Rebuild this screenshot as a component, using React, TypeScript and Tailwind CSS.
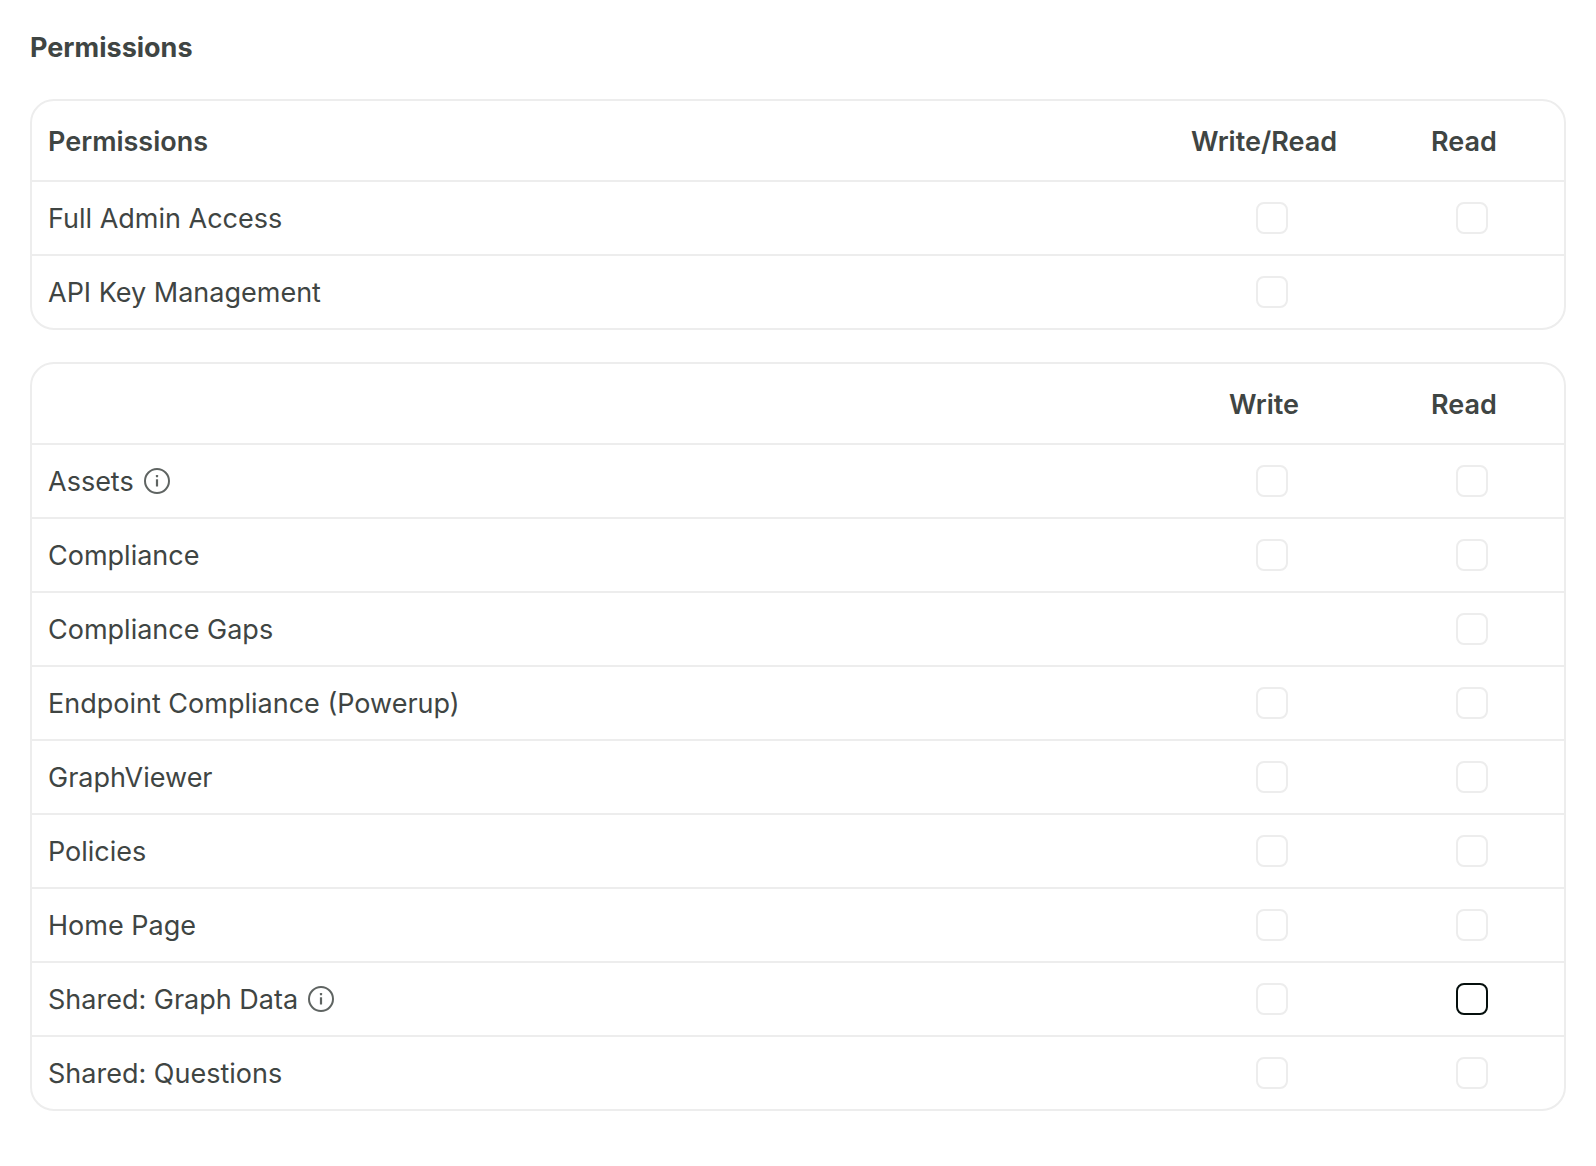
import { useState } from 'react'

type Access = 'write' | 'read'

interface IPermission {
   name: string
   access: Access[]
   info?: string
   highlighted?: Access
}

const adminPermissions: IPermission[] = [
   { name: 'Full Admin Access', access: ['write', 'read'] },
   { name: 'API Key Management', access: ['write'] },
]

const appPermissions: IPermission[] = [
   { name: 'Assets', access: ['write', 'read'], info: 'About assets' },
   { name: 'Compliance', access: ['write', 'read'] },
   { name: 'Compliance Gaps', access: ['read'] },
   { name: 'Endpoint Compliance (Powerup)', access: ['write', 'read'] },
   { name: 'GraphViewer', access: ['write', 'read'] },
   { name: 'Policies', access: ['write', 'read'] },
   { name: 'Home Page', access: ['write', 'read'] },
   { name: 'Shared: Graph Data', access: ['write', 'read'], info: 'About shared graph data', highlighted: 'read' },
   { name: 'Shared: Questions', access: ['write', 'read'] },
]

function InfoIcon() {
   return (
      <svg viewBox="0 0 26 26" fill="none" className="size-[26px]" aria-hidden="true">
         <circle cx="13" cy="13" r="12" stroke="currentColor" strokeWidth="2" />
         <rect x="11.9" y="7" width="2.2" height="2.2" rx="0.5" fill="currentColor" />
         <rect x="11.9" y="11.3" width="2.2" height="7.2" rx="0.5" fill="currentColor" />
      </svg>
   )
}

function Checkbox({ label, highlighted }: { label: string, highlighted: boolean }) {
   const [checked, setChecked] = useState(false)

   return (
      <input
         type="checkbox"
         aria-label={label}
         checked={checked}
         onChange={e => setChecked(e.target.checked)}
         className={`block mx-auto size-8 appearance-none rounded-lg border-2 bg-white checked:bg-[#050f0d] ${highlighted ? 'border-[#050f0d]' : 'border-[#ededed]'}`}
      />
   )
}

interface IPermissionsTable {
   title?: string
   writeLabel: string
   permissions: IPermission[]
}

function PermissionsTable({ title, writeLabel, permissions }: IPermissionsTable) {
   const columns: Access[] = ['write', 'read']

   return (
      <div className="overflow-hidden rounded-3xl border-2 border-[#ededed]">
         <table className="w-full table-fixed border-separate border-spacing-0">
            <thead>
               <tr className="[&>*]:h-[81px] [&>*]:border-b-2 [&>*]:border-[#ededed] [&>*]:pt-0.5 [&>*]:font-semibold">
                  {title ? <th scope="col" className="px-4 text-left">{title}</th> : <td></td>}
                  <th scope="col" className="w-[200px] text-center">{writeLabel}</th>
                  <th scope="col" className="w-[200px] text-center">Read</th>
               </tr>
            </thead>
            <tbody>
               {permissions.map(({ name, access, info, highlighted }) => (
                  <tr key={name} className="[&>*]:h-[74px] [&>*]:border-b-2 [&>*]:border-[#ededed] last:[&>*]:h-[72px] last:[&>*]:border-b-0">
                     <th scope="row" className="px-4 text-left font-normal">
                        <div className="flex items-center gap-2.5">
                           <span className="pt-0.5">{name}</span>
                           {info && (
                              <button type="button" aria-label={info} className="text-[#5f6462]">
                                 <InfoIcon />
                              </button>
                           )}
                        </div>
                     </th>
                     {columns.map(column => (
                        <td key={column} className="pl-4">
                           {access.includes(column) && (
                              <Checkbox label={`${name} ${column}`} highlighted={highlighted === column} />
                           )}
                        </td>
                     ))}
                  </tr>
               ))}
            </tbody>
         </table>
      </div>
   )
}

export default function App() {
   return (
      <main className="bg-white px-[30px] pt-7 pb-14 font-[Inter,'Liberation_Sans',sans-serif] text-[27px] leading-10 text-[#3f4543]">
         <h2 className="mb-[31px] font-bold">Permissions</h2>
         <div className="flex flex-col gap-8">
            <PermissionsTable title="Permissions" writeLabel="Write/Read" permissions={adminPermissions} />
            <PermissionsTable writeLabel="Write" permissions={appPermissions} />
         </div>
      </main>
   )
}
